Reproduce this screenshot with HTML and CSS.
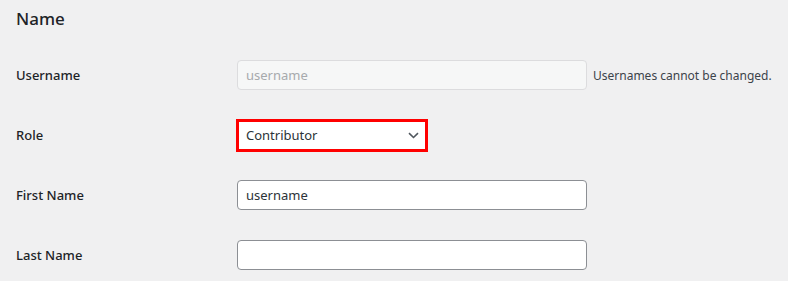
FILE: index.html
```html
<!DOCTYPE html>
<html lang="en">
<head>
<meta charset="utf-8">
<title>Name</title>
<link rel="stylesheet" href="styles.css">
</head>
<body>
<h2 class="title">Name</h2>
<div class="form">
  <div class="label">Username</div>
  <div class="field">
    <div class="input disabled">username</div>
    <span class="description">Usernames cannot be changed.</span>
  </div>

  <div class="label">Role</div>
  <div class="field">
    <div class="select">
      <span>Contributor</span>
      <svg class="chev" width="11" height="7" viewBox="0 0 11 7"><path d="M1 1.2 L5.5 5.5 L10 1.2" fill="none" stroke="#50575e" stroke-width="1.6"/></svg>
    </div>
  </div>

  <div class="label">First Name</div>
  <div class="field">
    <div class="input">username</div>
  </div>

  <div class="label">Last Name</div>
  <div class="field">
    <div class="input"></div>
  </div>
</div>
</body>
</html>
```
FILE: styles.css
```css
html, body {
  margin: 0;
  padding: 0;
  background: #f0f0f1;
}
body {
  font-family: "Noto Sans", "Open Sans", sans-serif;
  color: #1d2327;
  padding: 0 16px;
}
.title {
  margin: 0;
  height: 45px;
  padding-top: 8px;
  box-sizing: border-box;
  font-size: 17px;
  font-weight: 500;
  line-height: 22px;
}
.form {
  display: grid;
  grid-template-columns: 220px 1fr;
  grid-auto-rows: 60px;
  align-items: center;
}
.label {
  font-size: 13px;
  font-weight: 500;
}
.field {
  display: flex;
  align-items: center;
  gap: 6px;
  padding-left: 1px;
  white-space: nowrap;
}
.input {
  flex-shrink: 0;
  box-sizing: border-box;
  width: 350px;
  height: 30px;
  border: 1px solid #8c8f94;
  border-radius: 4px;
  background: #fff;
  padding: 0 8px;
  font-size: 13px;
  line-height: 28px;
  color: #2c3338;
}
.input.disabled {
  background: #f6f7f7;
  border-color: #dcdcde;
  color: #a7aaad;
}
.description {
  font-size: 12px;
  color: #3c434a;
}
.select {
  flex-shrink: 0;
  box-sizing: border-box;
  width: 192px;
  height: 33px;
  margin-left: -1px;
  border: 3px solid #f00;
  background: #fff;
  display: flex;
  align-items: center;
  justify-content: space-between;
  padding: 0 6px 0 7px;
  font-size: 13px;
  color: #2c3338;
}
.chev {
  display: block;
}
```
